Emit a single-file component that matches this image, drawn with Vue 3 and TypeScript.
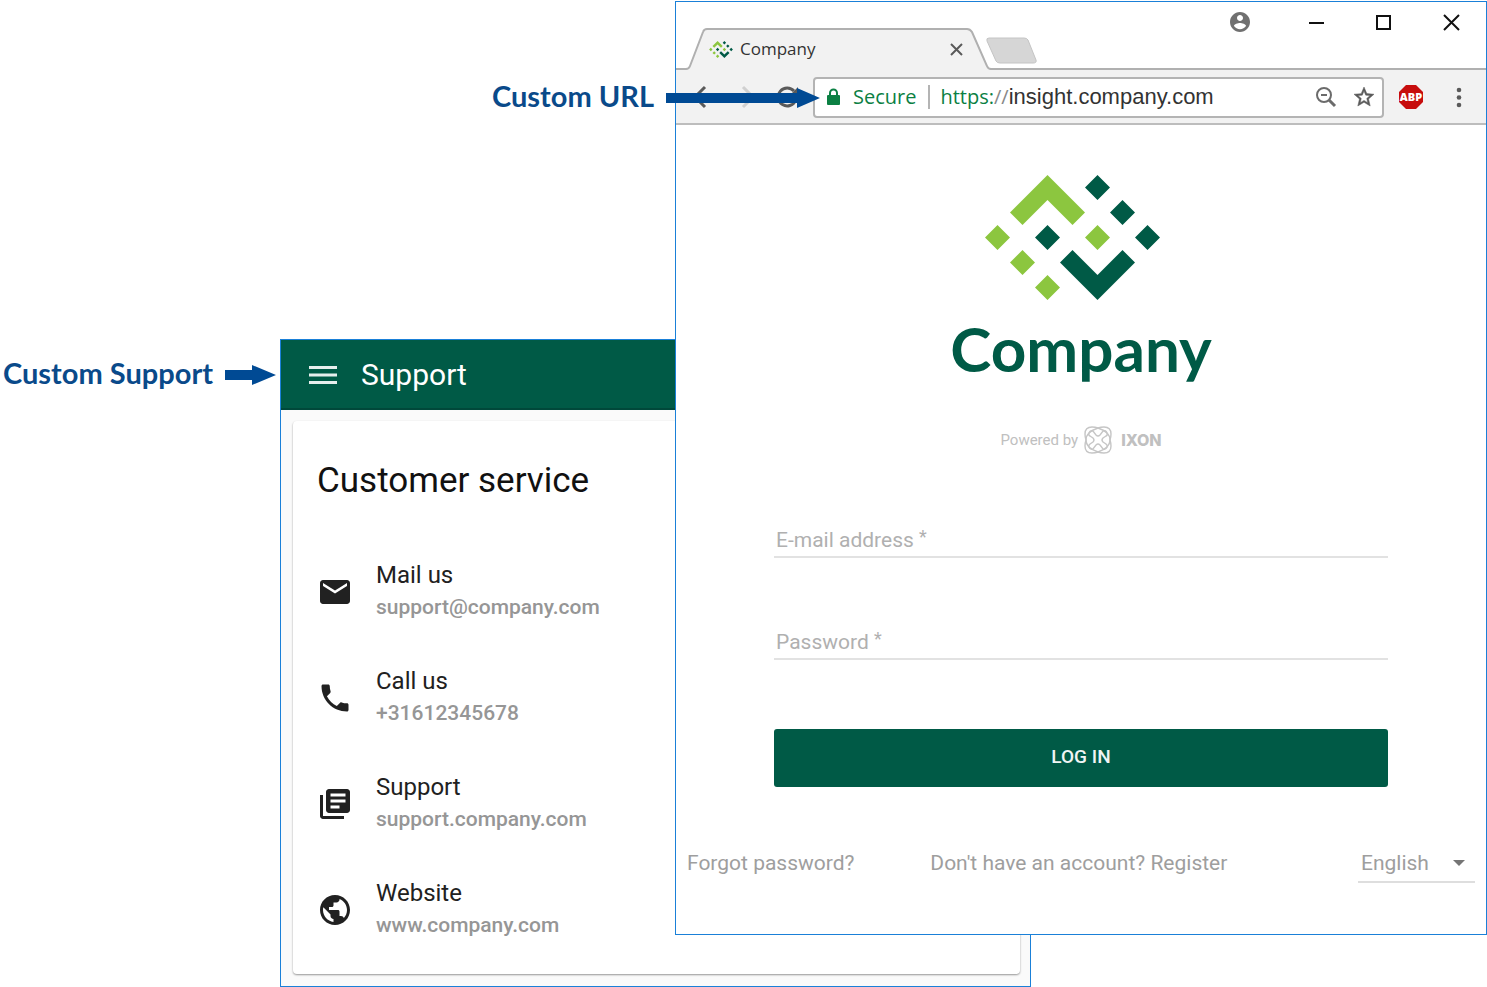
<script setup lang="ts">
import { ref } from 'vue'

interface Contact {
  title: string
  detail: string
  href: string
  icon: string
}

const contacts: Contact[] = [
  {
    title: 'Mail us',
    detail: 'support@company.com',
    href: 'mailto:support@company.com',
    icon: 'M20 4H4c-1.100 0-1.990.9-1.990 2L2 18c0 1.100.9 2 2 2h16c1.100 0 2-.9 2-2V6c0-1.100-.9-2-2-2zm0 4l-8 5-8-5V6l8 5 8-5v2z',
  },
  {
    title: 'Call us',
    detail: '+31612345678',
    href: 'tel:+31612345678',
    icon: 'M6.620 10.790c1.440 2.830 3.760 5.140 6.590 6.590l2.200-2.200c.27-.27.67-.36 1.020-.24 1.120.37 2.330.57 3.570.57.55 0 1 .45 1 1V20c0 .55-.45 1-1 1-9.390 0-17-7.610-17-17 0-.55.45-1 1-1h3.500c.55 0 1 .45 1 1 0 1.250.2 2.450.57 3.570.11.35.03.74-.25 1.020l-2.200 2.200z',
  },
  {
    title: 'Support',
    detail: 'support.company.com',
    href: '#support',
    icon: 'M4 6H2v14c0 1.100.9 2 2 2h14v-2H4V6zm16-4H8c-1.100 0-2 .9-2 2v12c0 1.100.9 2 2 2h12c1.100 0 2-.9 2-2V4c0-1.100-.9-2-2-2zm-1 9H9V9h10v2zm-4 4H9v-2h6v2zm4-8H9V5h10v2z',
  },
  {
    title: 'Website',
    detail: 'www.company.com',
    href: '#website',
    icon: 'M12 2C6.480 2 2 6.480 2 12s4.480 10 10 10 10-4.480 10-10S17.520 2 12 2zm-1 17.930c-3.950-.49-7-3.850-7-7.930 0-.62.08-1.210.21-1.790L9 15v1c0 1.100.9 2 2 2v1.930zm6.900-2.540c-.26-.81-1-1.390-1.900-1.390h-1v-3c0-.55-.45-1-1-1H8v-2h2c.55 0 1-.45 1-1V7h2c1.100 0 2-.9 2-2v-.41c2.930 1.190 5 4.060 5 7.410 0 2.080-.8 3.970-2.100 5.390z',
  },
]

const diamond = (x: number, y: number) => `M${x} ${y - 12.5}l12.500 12.500-12.500 12.500-12.500-12.500z`
const lightMark =
  'M62.500 0L100 37.500 87.500 50l-25-25-25 25L25 37.500z' +
  diamond(12.5, 62.5) + diamond(37.5, 87.5) + diamond(62.5, 112.5) + diamond(112.5, 62.5)
const darkMark =
  'M87.500 75l25 25 25-25L150 87.500 112.500 125 75 87.500z' +
  diamond(112.5, 12.5) + diamond(137.5, 37.5) + diamond(162.5, 62.5) + diamond(62.5, 62.5)

const email = ref('')
const password = ref('')
const language = ref('English')
</script>

<template>
  <main class="stage">
    <p class="callout callout-support">
      <span>Custom Support</span>
      <svg width="51" height="20" viewBox="0 0 51 20" aria-hidden="true"><path d="M0 5h27V0l24 10-24 10v-5H0z" /></svg>
    </p>

    <section class="support">
      <header class="appbar">
        <button class="plain" type="button" aria-label="Menu">
          <svg width="28" height="20" viewBox="0 0 28 20"><path d="M0 2.500h28M0 10h28M0 17.500h28" stroke="#e6efed" stroke-width="3" /></svg>
        </button>
        <h1>Support</h1>
      </header>
      <div class="card">
        <h2>Customer service</h2>
        <ul>
          <li v-for="c in contacts" :key="c.title">
            <svg width="36" height="36" viewBox="0 0 24 24" aria-hidden="true"><path :d="c.icon" fill="#212121" /></svg>
            <div>
              <h3>{{ c.title }}</h3>
              <a :href="c.href">{{ c.detail }}</a>
            </div>
          </li>
        </ul>
      </div>
    </section>

    <section class="browser">
      <div class="strip">
        <div class="tab">
          <svg class="tab-shape" width="306" height="42" viewBox="0 0 306 42" aria-hidden="true">
            <path d="M0 41.500H1Q4 41 5 38L18 4Q19 1 22 1H282Q285 1 287 4L303 39Q304 41.500 306 41.500V42H0z" fill="#f2f2f2" />
            <path d="M0 41H1Q4 41 5 38L18 4Q19 1 22 1H282Q285 1 287 4L302 38Q303 41 306 41" fill="none" stroke="#b0b0b0" stroke-width="2" />
          </svg>
          <svg class="favicon" width="24" height="17" viewBox="0 0 175 125" aria-hidden="true">
            <path :d="lightMark" fill="#8cc63f" /><path :d="darkMark" fill="#005a46" />
          </svg>
          <span class="tab-title">Company</span>
          <button class="plain" type="button" aria-label="Close tab">
            <svg width="13" height="13" viewBox="0 0 13 13"><path d="M1 1l11 11M12 1L1 12" stroke="#5a5a5a" stroke-width="2" /></svg>
          </button>
        </div>
        <button class="plain new-tab" type="button" aria-label="New tab">
          <svg width="51" height="27" viewBox="0 0 51 27"><path d="M3 1H38Q41 1 42 3L50 23Q51 26 47 26H14Q11 26 10 24L1 4Q0 1 3 1z" fill="#d6d6d6" stroke="#c4c4c4" /></svg>
        </button>
        <div class="controls">
          <button class="plain profile" type="button" aria-label="Profile">
            <svg width="24" height="24" viewBox="0 0 24 24"><path d="M12 2C6.480 2 2 6.480 2 12s4.480 10 10 10 10-4.480 10-10S17.520 2 12 2zm0 3c1.660 0 3 1.340 3 3s-1.340 3-3 3-3-1.340-3-3 1.340-3 3-3zm0 14.200c-2.500 0-4.710-1.280-6-3.220.03-1.990 4-3.080 6-3.080 1.990 0 5.970 1.090 6 3.080-1.290 1.940-3.500 3.220-6 3.220z" fill="#707070" /></svg>
          </button>
          <button class="plain" type="button" aria-label="Minimize">
            <svg width="24" height="24" viewBox="0 0 24 24"><path d="M5 13h15" stroke="#111" stroke-width="2" /></svg>
          </button>
          <button class="plain" type="button" aria-label="Maximize">
            <svg width="24" height="24" viewBox="0 0 24 24"><rect x="5" y="6" width="13" height="13" fill="none" stroke="#111" stroke-width="2" /></svg>
          </button>
          <button class="plain" type="button" aria-label="Close">
            <svg width="24" height="24" viewBox="0 0 24 24"><path d="M4 5l15 15M19 5L4 20" stroke="#111" stroke-width="2" /></svg>
          </button>
        </div>
      </div>

      <div class="toolbar">
        <button class="plain" type="button" aria-label="Back">
          <svg width="24" height="24" viewBox="0 0 24 24"><path d="M18 2L8 12l10 10M8 12h16" fill="none" stroke="#5a5a5a" stroke-width="3" /></svg>
        </button>
        <button class="plain forward" type="button" aria-label="Forward">
          <svg width="24" height="24" viewBox="0 0 24 24"><path d="M8 2l10 10L8 22M0 12h18" fill="none" stroke="#d0d0d0" stroke-width="3" /></svg>
        </button>
        <button class="plain reload" type="button" aria-label="Reload">
          <svg width="24" height="24" viewBox="0 0 24 24"><path d="M20.500 15.500A9 9 0 1 1 19 6" fill="none" stroke="#5a5a5a" stroke-width="3" /><path d="M23 2v9h-9z" fill="#5a5a5a" /></svg>
        </button>
        <div class="omnibox">
          <svg width="13" height="18" viewBox="0 0 13 18" aria-hidden="true"><path d="M3 8V5a3.500 3.500 0 0 1 7 0v3" fill="none" stroke="#0b8043" stroke-width="2" /><rect y="7" width="13" height="10" rx="1" fill="#0b8043" /></svg>
          <span class="secure">Secure</span>
          <span class="url"><span class="scheme">https:<i>//</i></span>insight.company.com</span>
          <button class="plain" type="button" aria-label="Zoom">
            <svg width="22" height="22" viewBox="0 0 22 22"><circle cx="9" cy="9" r="7" fill="none" stroke="#6b6b6b" stroke-width="2" /><path d="M14 14l6 6" stroke="#6b6b6b" stroke-width="3" /><path d="M6 9h6" stroke="#6b6b6b" stroke-width="2" /></svg>
          </button>
          <button class="plain" type="button" aria-label="Bookmark">
            <svg width="24" height="24" viewBox="0 0 24 24"><path d="M22 9.240l-7.190-.62L12 2 9.190 8.630 2 9.240l5.460 4.730L5.820 21 12 17.270 18.180 21l-1.630-7.030L22 9.240zM12 15.400l-3.760 2.270 1-4.280-3.320-2.880 4.380-.38L12 6.100l1.710 4.040 4.380.38-3.320 2.880 1 4.280L12 15.400z" fill="#5a5a5a" stroke="#5a5a5a" stroke-width=".5" /></svg>
          </button>
        </div>
        <button class="plain abp" type="button" aria-label="Adblock Plus">
          <svg width="24" height="24" viewBox="0 0 24 24"><path d="M7 0h10l7 7v10l-7 7H7l-7-7V7z" fill="#c70d0d" /><text x="12" y="16" text-anchor="middle" font-family="Open Sans, sans-serif" font-size="11" font-weight="800" fill="#fff">ABP</text></svg>
        </button>
        <button class="plain more" type="button" aria-label="More">
          <svg width="24" height="24" viewBox="0 0 24 24" fill="#5a5a5a"><circle cx="12" cy="5" r="2.300" /><circle cx="12" cy="12.500" r="2.300" /><circle cx="12" cy="20" r="2.300" /></svg>
        </button>
      </div>

      <div class="page">
        <svg class="mark" width="192" height="125" viewBox="0 0 192 125" aria-hidden="true">
          <path :d="lightMark" fill="#8cc63f" /><path :d="darkMark" fill="#005a46" />
        </svg>
        <div class="wordmark">Company</div>
        <div class="powered">
          <span>Powered by</span>
          <svg width="28" height="28" viewBox="0 0 28 28" fill="none" stroke="#c6c6c6" stroke-width="1.400" aria-hidden="true">
            <path d="M8 1Q11 1 14 2Q17 1 20 1Q27 1 27 8Q27 11 26 14Q27 17 27 20Q27 27 20 27Q17 27 14 26Q11 27 8 27Q1 27 1 20Q1 17 2 14Q1 11 1 8Q1 1 8 1z" />
            <path d="M14 2Q8 4 5 7Q2 10 2 14M14 2Q20 4 23 7Q26 10 26 14M14 26Q8 24 5 21Q2 18 2 14M14 26Q20 24 23 21Q26 18 26 14" />
            <path d="M5 7Q6 4 9 5L12 9Q14 11 16 9L19 5Q22 4 23 7Q24 9 22 10L19 12Q17 14 19 16L22 18Q24 20 23 21Q22 24 19 23L16 19Q14 17 12 19L9 23Q6 24 5 21Q4 20 6 18L9 16Q11 14 9 12L6 10Q4 9 5 7z" />
          </svg>
          <b>IXON</b>
        </div>
        <form @submit.prevent>
          <div class="field">
            <label for="email">E-mail address <sup>*</sup></label>
            <input id="email" v-model="email" type="email" />
          </div>
          <div class="field">
            <label for="password">Password <sup>*</sup></label>
            <input id="password" v-model="password" type="password" />
          </div>
          <button class="login" type="submit">LOG IN</button>
        </form>
        <footer>
          <a href="#forgot">Forgot password?</a>
          <a href="#register">Don't have an account? Register</a>
          <div class="language">
            <select v-model="language" aria-label="Language">
              <option>English</option>
            </select>
            <svg width="12" height="6" viewBox="0 0 12 6" aria-hidden="true"><path d="M0 0h12L6 6z" fill="#757575" /></svg>
          </div>
        </footer>
      </div>
    </section>

    <p class="callout callout-url">
      <span>Custom URL</span>
      <svg width="154" height="20" viewBox="0 0 154 20" aria-hidden="true"><path d="M0 5h131V0l23 10-23 10v-5H0z" /></svg>
    </p>
  </main>
</template>

<style>
body {
  margin: 0;
  background: #fff;
}
</style>

<style scoped>
* {
  box-sizing: border-box;
}

h1, h2, h3, p, ul {
  margin: 0;
  padding: 0;
  font-weight: 400;
}

svg {
  display: block;
  flex: none;
}

a {
  text-decoration: none;
}

.plain {
  flex: none;
  padding: 0;
  border: 0;
  background: none;
}

/* The two windows share one grid row and overlap in the third column. */
.stage {
  display: grid;
  grid-template-columns: 280fr 395fr 356fr 456fr;
  align-items: start;
  font-family: Roboto, sans-serif;
}

.callout {
  display: flex;
  grid-row: 1;
  align-items: center;
  justify-self: end;
  gap: 12px;
  color: #0a4a8a;
  font: 700 29px/36px Lato, sans-serif;
  white-space: nowrap;
}

.callout span {
  padding-bottom: 4px;
}

.callout svg {
  fill: #004a94;
}

.callout-support {
  grid-column: 1;
  margin-top: 355px;
  margin-right: 4px;
}

.callout-url {
  z-index: 2;
  grid-column: 2;
  margin-top: 78px;
  margin-right: -145px;
}

.support {
  grid-row: 1;
  grid-column: 2 / 4;
  margin-top: 339px;
  padding-bottom: 12px;
  border: 1px solid #1a80d8;
  background: #fafafa;
}

.appbar {
  display: flex;
  align-items: center;
  gap: 24px;
  height: 70px;
  padding: 2px 0 0 28px;
  border-bottom: 2px solid #00483a;
  background: #005a46;
  color: #fff;
}

.appbar h1 {
  font-size: 30px;
  line-height: 36px;
}

.card {
  margin: 11px 10px 0 12px;
  padding: 39px 24px 11px;
  border-radius: 4px;
  background: #fff;
  box-shadow: 0 1px 2px rgba(0, 0, 0, 0.4);
}

.card h2 {
  margin-bottom: 37px;
  color: #111;
  font-size: 35px;
  line-height: 42px;
}

.card li {
  display: flex;
  align-items: center;
  gap: 23px;
  height: 106px;
}

.card li div {
  padding-bottom: 2px;
}

.card h3 {
  color: #212121;
  font-size: 24px;
  line-height: 32px;
}

.card li a {
  display: block;
  color: #969696;
  font-size: 21px;
  font-weight: 500;
  line-height: 32px;
}

.browser {
  z-index: 1;
  grid-row: 1;
  grid-column: 3 / 5;
  margin-top: 1px;
  border: 1px solid #1a80d8;
  background: #fff;
}

.strip {
  display: flex;
  align-items: flex-end;
  height: 68px;
  padding-left: 9px;
  background: linear-gradient(#b0b0b0, #b0b0b0) bottom / 100% 2px no-repeat;
}

.tab {
  position: relative;
  display: flex;
  align-items: center;
  width: 306px;
  height: 42px;
  padding: 0 28px 0 24px;
  font-family: "Open Sans", sans-serif;
}

.tab-shape {
  position: absolute;
  top: 0;
  left: 0;
}

.favicon,
.tab .plain {
  position: relative;
}

.tab-title {
  position: relative;
  flex: 1;
  margin-left: 7px;
  color: #333;
  font-size: 17px;
  line-height: 24px;
}

.new-tab {
  margin: 0 auto 6px -5px;
}

.controls {
  display: flex;
  align-self: flex-start;
  gap: 44px;
  padding: 8px 22px 0 0;
}

.profile {
  margin-right: 8px;
}

.toolbar {
  display: flex;
  align-items: center;
  height: 55px;
  padding: 1px 15px 0 11px;
  border-bottom: 2px solid #bdbdbd;
  background: #f2f2f2;
}

.forward {
  margin-left: 24px;
}

.reload {
  margin: 0 14px 0 16px;
}

.omnibox {
  display: flex;
  flex: 1;
  align-items: center;
  gap: 15px;
  min-width: 0;
  height: 41px;
  padding: 0 6px 0 12px;
  border: 2px solid #b4b4b4;
  border-radius: 4px;
  background: #fff;
}

.secure {
  margin-left: -2px;
  padding-right: 12px;
  border-right: 2px solid #b4b4b4;
  color: #0b8043;
  font: 20px/24px "Open Sans", sans-serif;
}

.url {
  flex: 1;
  margin-left: -5px;
  color: #333;
  font: 22px/28px "Liberation Sans", sans-serif;
  white-space: nowrap;
}

.scheme {
  color: #0b8043;
  font: 20px/28px "Open Sans", sans-serif;
}

.scheme i {
  color: #888;
  font-style: normal;
}

.abp {
  margin: 0 24px 0 15px;
}

.page {
  display: flex;
  flex-direction: column;
  align-items: center;
  padding: 50px 11px 51px;
}

.wordmark {
  margin-top: 10px;
  color: #005a46;
  font: 700 62px/76px Lato, sans-serif;
}

.powered {
  display: flex;
  align-items: center;
  margin-top: 40px;
  color: #c0c0c0;
  font-size: 15px;
  line-height: 28px;
}

.powered svg {
  margin: 0 9px 0 6px;
}

.powered b {
  font: 800 16px/28px Inter, sans-serif;
}

form {
  align-self: stretch;
  margin: 64px 87px 0;
}

.field {
  position: relative;
  margin-bottom: 62px;
}

.field label {
  position: absolute;
  top: 8px;
  left: 2px;
  color: #b0b0b0;
  font-size: 21px;
  line-height: 28px;
  pointer-events: none;
}

.field sup {
  font-size: 18px;
  line-height: 0;
  vertical-align: 4px;
}

.field input {
  display: block;
  width: 100%;
  height: 40px;
  padding: 8px 2px 0;
  border: 0;
  border-bottom: 2px solid #e2e2e2;
  background: none;
  font: 21px/28px Roboto, sans-serif;
}

.login {
  display: block;
  width: 100%;
  height: 58px;
  margin-top: 69px;
  padding: 0 0 2px;
  border: 0;
  border-radius: 3px;
  background: #005a46;
  color: #f0f5f4;
  font: 500 19px/24px Roboto, sans-serif;
}

footer {
  display: grid;
  grid-template-columns: 243fr 427fr 117px;
  align-items: center;
  align-self: stretch;
  margin-top: 56px;
  font-size: 21px;
  line-height: 28px;
}

footer a {
  color: #9e9e9e;
}

.language {
  position: relative;
}

.language select {
  display: block;
  width: 100%;
  height: 40px;
  padding: 2px 3px 0;
  border: 0;
  border-bottom: 2px solid #dedede;
  border-radius: 0;
  background: none;
  color: #9e9e9e;
  font: 21px/28px Roboto, sans-serif;
  appearance: none;
}

.language svg {
  position: absolute;
  top: 17px;
  right: 10px;
  pointer-events: none;
}
</style>
